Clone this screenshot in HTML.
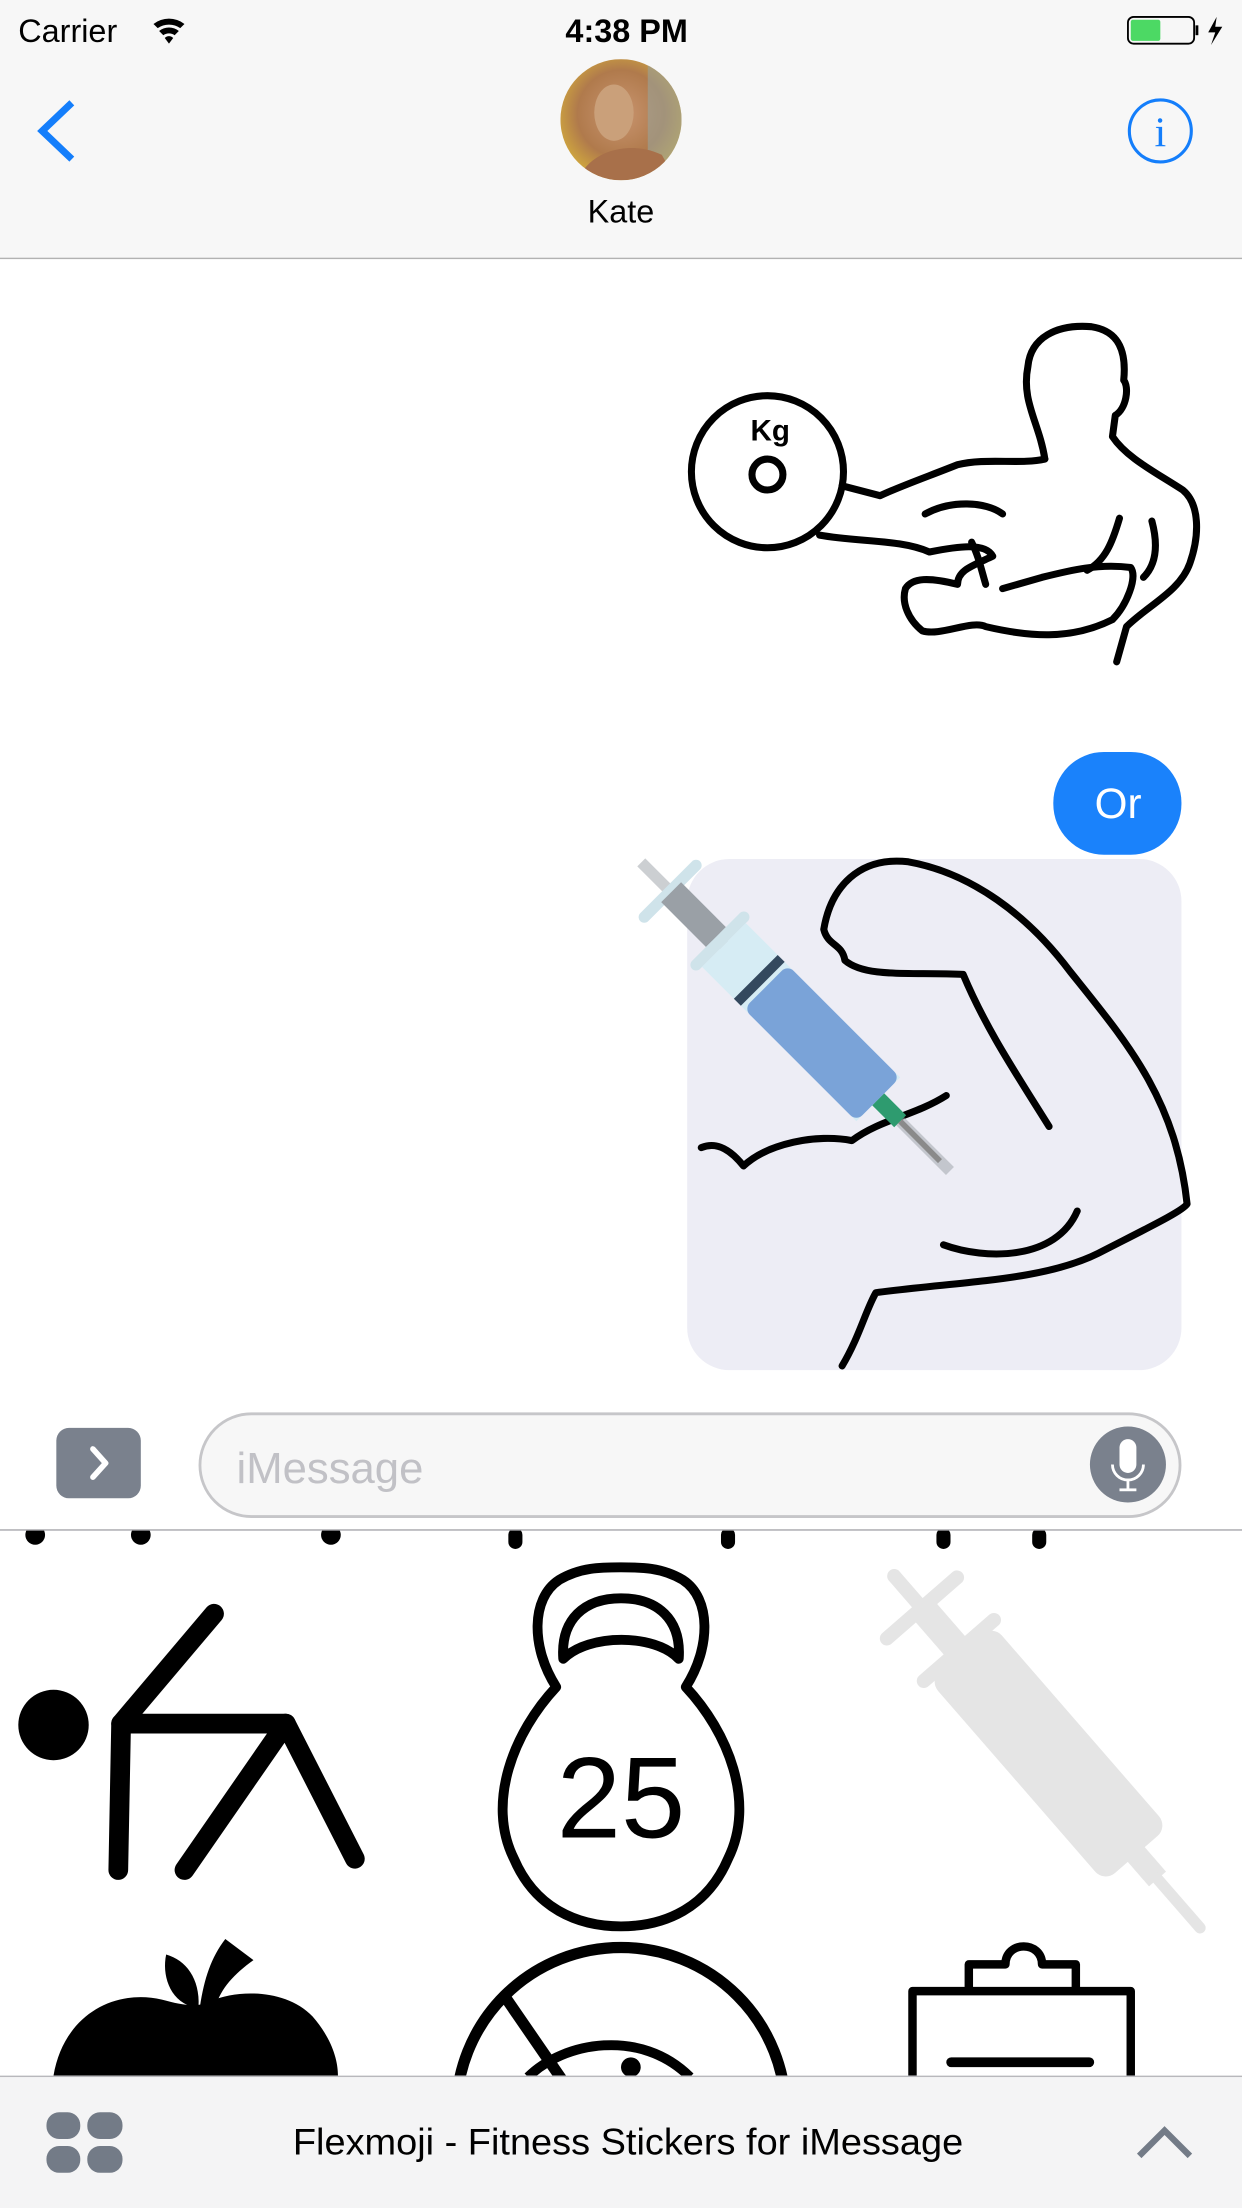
<!DOCTYPE html>
<html><head><meta charset="utf-8"><style>
html,body{margin:0;padding:0;background:#fff;}
svg{display:block;}
</style></head><body>
<svg width="1242" height="2208" viewBox="0 0 882 1568" xmlns="http://www.w3.org/2000/svg" font-family="Liberation Sans, sans-serif">
<defs>
<radialGradient id="av" cx="0.5" cy="0.45" r="0.6">
<stop offset="0" stop-color="#c99570"/><stop offset="0.6" stop-color="#b07a4c"/><stop offset="1" stop-color="#d8b23a"/>
</radialGradient>
<clipPath id="stk"><rect x="0" y="1087" width="882" height="387"/></clipPath>
<clipPath id="avc"><circle cx="441" cy="85" r="43"/></clipPath>
</defs>
<rect x="0" y="0" width="882" height="183" fill="#f7f7f7"/>
<rect x="0" y="183" width="882" height="1" fill="#b2b2b2"/>
<text x="13" y="30" font-size="23" fill="#000">Carrier</text>
<g fill="#000">
<path d="M109,17 A18,18 0 0 1 131,17 L128,20 A14,14 0 0 0 112,20 Z"/>
<path d="M113,22 A11,11 0 0 1 127,22 L124,25 A7,7 0 0 0 116,25 Z"/>
<path d="M117,27 L120,31 L123,27 A4,4 0 0 0 117,27 Z"/>
</g>
<text x="445" y="30" font-size="23" font-weight="bold" text-anchor="middle" fill="#000">4:38 PM</text>
<rect x="801" y="12" width="47" height="19" rx="4" fill="none" stroke="#000" stroke-width="1.3"/>
<rect x="803" y="14" width="21" height="15" rx="1.5" fill="#4cd964"/>
<rect x="849" y="18" width="2" height="7" fill="#000"/>
<path d="M864,12 L858,23 L863,23 L860,32 L868,19 L863,19 Z" fill="#000"/>
<g clip-path="url(#avc)">
<rect x="398" y="42" width="86" height="86" fill="url(#av)"/>
<rect x="460" y="42" width="24" height="86" fill="#9aa39a" opacity="0.6"/>
<ellipse cx="436" cy="80" rx="14" ry="20" fill="#caa07a"/>
<path d="M410,128 C420,105 450,100 470,110 L480,128 Z" fill="#a8704a"/>
</g>
<text x="441" y="158" font-size="23" text-anchor="middle" fill="#000">Kate</text>
<polyline points="51,73 30,93 51,113" fill="none" stroke="#147efb" stroke-width="5"/>
<circle cx="824" cy="93" r="22" fill="none" stroke="#147efb" stroke-width="2.2"/>
<text x="824" y="104" font-size="30" font-family="Liberation Serif, serif" text-anchor="middle" fill="#147efb">i</text>

<g fill="none" stroke="#000" stroke-width="5" stroke-linecap="round" stroke-linejoin="round">
<circle cx="545" cy="335" r="54"/>
<circle cx="545" cy="337" r="11"/>
<path d="M598,345 L625,352 C640,345 660,338 680,330 C700,325 725,330 742,326"/>
<path d="M742,326 C738,300 725,285 730,260 C732,240 750,230 775,232 C795,235 800,250 798,270 C802,275 800,290 792,295 L790,310 C800,325 820,335 840,348 C852,358 852,380 845,400 C838,420 815,430 800,445 L793,470"/>
<path d="M582,380 C610,385 640,383 660,392 C680,388 700,385 705,395 C690,402 680,405 680,415 C660,410 648,410 643,418 C640,428 645,440 655,448 C668,452 690,440 700,445 C730,452 760,455 790,440 C800,430 808,410 803,403 C780,400 760,405 740,410 L712,418"/>
<path d="M657,365 C675,355 700,356 712,365"/>
<path d="M795,368 C790,385 785,398 772,405"/>
<path d="M818,370 C822,385 822,400 812,410"/>
<path d="M690,385 C695,395 697,405 700,415"/>
</g>
<text x="547" y="313" font-size="21" font-weight="bold" text-anchor="middle" fill="#000">Kg</text>

<rect x="748" y="534" width="91" height="73" rx="36" fill="#1a82fb"/>
<text x="794" y="581" font-size="30" text-anchor="middle" fill="#fff">Or</text>

<rect x="488" y="610" width="351" height="363" rx="30" fill="#ededf5"/>
<g fill="none" stroke="#000" stroke-width="5" stroke-linecap="round" stroke-linejoin="round">
<path d="M598,970 C610,950 615,930 622,918 C680,910 740,910 780,890 C815,872 840,860 843,855 C835,780 800,740 760,690 C730,650 690,620 645,612 C610,608 590,630 585,660 C588,672 598,670 600,682 C615,695 650,690 684,692 C700,730 720,760 745,800"/>
<path d="M498,815 C510,810 520,818 528,828 C545,812 580,805 605,810 C625,795 650,792 672,778"/>
<path d="M670,884 C700,895 750,895 765,860"/>
</g>
<g transform="translate(565,722) rotate(45)">
<rect x="-155" y="-4" width="310" height="8" fill="#9aa0a6" opacity="0.5"/>
<rect x="-130" y="-30" width="8" height="60" rx="4" fill="#cfe3ea"/>
<rect x="-125" y="-10" width="45" height="20" fill="#9aa0a6"/>
<rect x="-80" y="-28" width="8" height="56" rx="4" fill="#cfe3ea"/>
<rect x="-72" y="-22" width="155" height="44" fill="#d6ecf4"/>
<rect x="-30" y="-22" width="113" height="44" rx="6" fill="#7aa3d8"/>
<rect x="-40" y="-22" width="7" height="44" fill="#34495e"/>
<rect x="83" y="-6" width="22" height="12" fill="#2e9b6f"/>
<rect x="105" y="-2" width="40" height="4" fill="#8a8a8a"/>
</g>

<rect x="40" y="1014" width="60" height="50" rx="9" fill="#7a818d"/>
<polyline points="66,1029 75,1039 66,1049" fill="none" stroke="#fff" stroke-width="4" stroke-linecap="round" stroke-linejoin="round"/>
<rect x="142" y="1004" width="696" height="73" rx="36.5" fill="#f7f7f7" stroke="#c6c6c9" stroke-width="2"/>
<text x="168" y="1053" font-size="31" fill="#c1c1c6">iMessage</text>
<circle cx="801" cy="1040" r="27" fill="#7a818d"/>
<rect x="795" y="1022" width="12" height="24" rx="6" fill="#fff"/>
<path d="M790,1040 A11,11 0 0 0 812,1040" fill="none" stroke="#fff" stroke-width="2"/>
<rect x="800" y="1050" width="2" height="8" fill="#fff"/><rect x="795" y="1057" width="12" height="2" fill="#fff"/>
<rect x="0" y="1086" width="882" height="1" fill="#a8a8ad"/>

<g clip-path="url(#stk)">
<g fill="#000">
<circle cx="25" cy="1090" r="7"/><circle cx="100" cy="1090" r="7"/><circle cx="235" cy="1090" r="7"/>
<rect x="361" y="1085" width="10" height="15" rx="5"/><rect x="512" y="1085" width="10" height="15" rx="5"/>
<rect x="665" y="1085" width="10" height="15" rx="5"/><rect x="733" y="1085" width="10" height="15" rx="5"/>
</g>
<circle cx="38" cy="1225" r="25" fill="#000"/>
<g fill="none" stroke="#000" stroke-width="14" stroke-linecap="round" stroke-linejoin="round">
<polyline points="84,1328 86,1224 203,1224 252,1320"/>
<line x1="203" y1="1224" x2="131" y2="1328"/>
<line x1="86" y1="1224" x2="152" y2="1146"/>
</g>
<g fill="none" stroke="#000" stroke-width="7" stroke-linejoin="round">
<path d="M395,1198 C365,1230 345,1280 365,1320 C380,1355 410,1368 441,1368 C472,1368 502,1355 517,1320 C537,1280 517,1230 487,1198 C505,1170 505,1135 485,1122 C470,1113 455,1113 441,1113 C427,1113 412,1113 397,1122 C377,1135 377,1170 395,1198 Z"/>
<path d="M400,1178 C398,1150 415,1135 441,1135 C467,1135 484,1150 482,1178 C465,1160 418,1160 400,1178 Z"/>
</g>
<text x="441" y="1305" font-size="82" text-anchor="middle" fill="#000">25</text>
<g transform="translate(740,1240) rotate(49)" fill="#e5e5e5">
<rect x="-165" y="-5" width="40" height="10" rx="5"/>
<rect x="-135" y="-38" width="10" height="76" rx="5"/>
<rect x="-130" y="-10" width="40" height="20"/>
<rect x="-95" y="-38" width="10" height="76" rx="5"/>
<rect x="-88" y="-30" width="190" height="60" rx="10"/>
<rect x="100" y="-8" width="25" height="16"/>
<rect x="120" y="-4" width="55" height="8" rx="4"/>
</g>
<g fill="#000">
<path d="M38,1474 C45,1432 80,1412 115,1420 C130,1424 140,1426 150,1421 C168,1413 203,1412 222,1432 C235,1447 240,1462 240,1474 Z"/>
<path d="M136,1425 C120,1420 115,1402 118,1388 C132,1392 142,1405 141,1425 Z"/>
<path d="M142,1425 C145,1405 150,1390 160,1377 L180,1392 C166,1402 157,1412 153,1425 Z"/>
</g>
<circle cx="441" cy="1500" r="117" fill="none" stroke="#000" stroke-width="8"/>
<line x1="360" y1="1420" x2="415" y2="1500" stroke="#000" stroke-width="8"/>
<path d="M375,1475 C400,1450 455,1440 490,1475" fill="none" stroke="#000" stroke-width="7"/>
<circle cx="448" cy="1468" r="7" fill="#000"/>
<g fill="none" stroke="#000" stroke-width="6" stroke-linejoin="round">
<rect x="648" y="1414" width="155" height="80"/>
<path d="M688,1414 L688,1395 L714,1395 C714,1378 740,1378 740,1395 L764,1395 L764,1414"/>
</g>
<rect x="672" y="1461" width="105" height="7" rx="3.5" fill="#000"/>
</g>

<rect x="0" y="1474" width="882" height="94" fill="#f4f4f5"/>
<rect x="0" y="1474" width="882" height="1" fill="#b8b8bc"/>
<g fill="#737b87">
<rect x="33" y="1500" width="24" height="19" rx="9"/><rect x="62" y="1500" width="25" height="19" rx="9"/>
<rect x="33" y="1524" width="24" height="19" rx="9"/><rect x="62" y="1524" width="25" height="19" rx="9"/>
</g>
<text x="446" y="1530" font-size="26" text-anchor="middle" fill="#000" textLength="476" lengthAdjust="spacingAndGlyphs">Flexmoji - Fitness Stickers for iMessage</text>
<polyline points="809,1531 827,1513 845,1531" fill="none" stroke="#737b87" stroke-width="4.5"/>
</svg>
</body></html>
